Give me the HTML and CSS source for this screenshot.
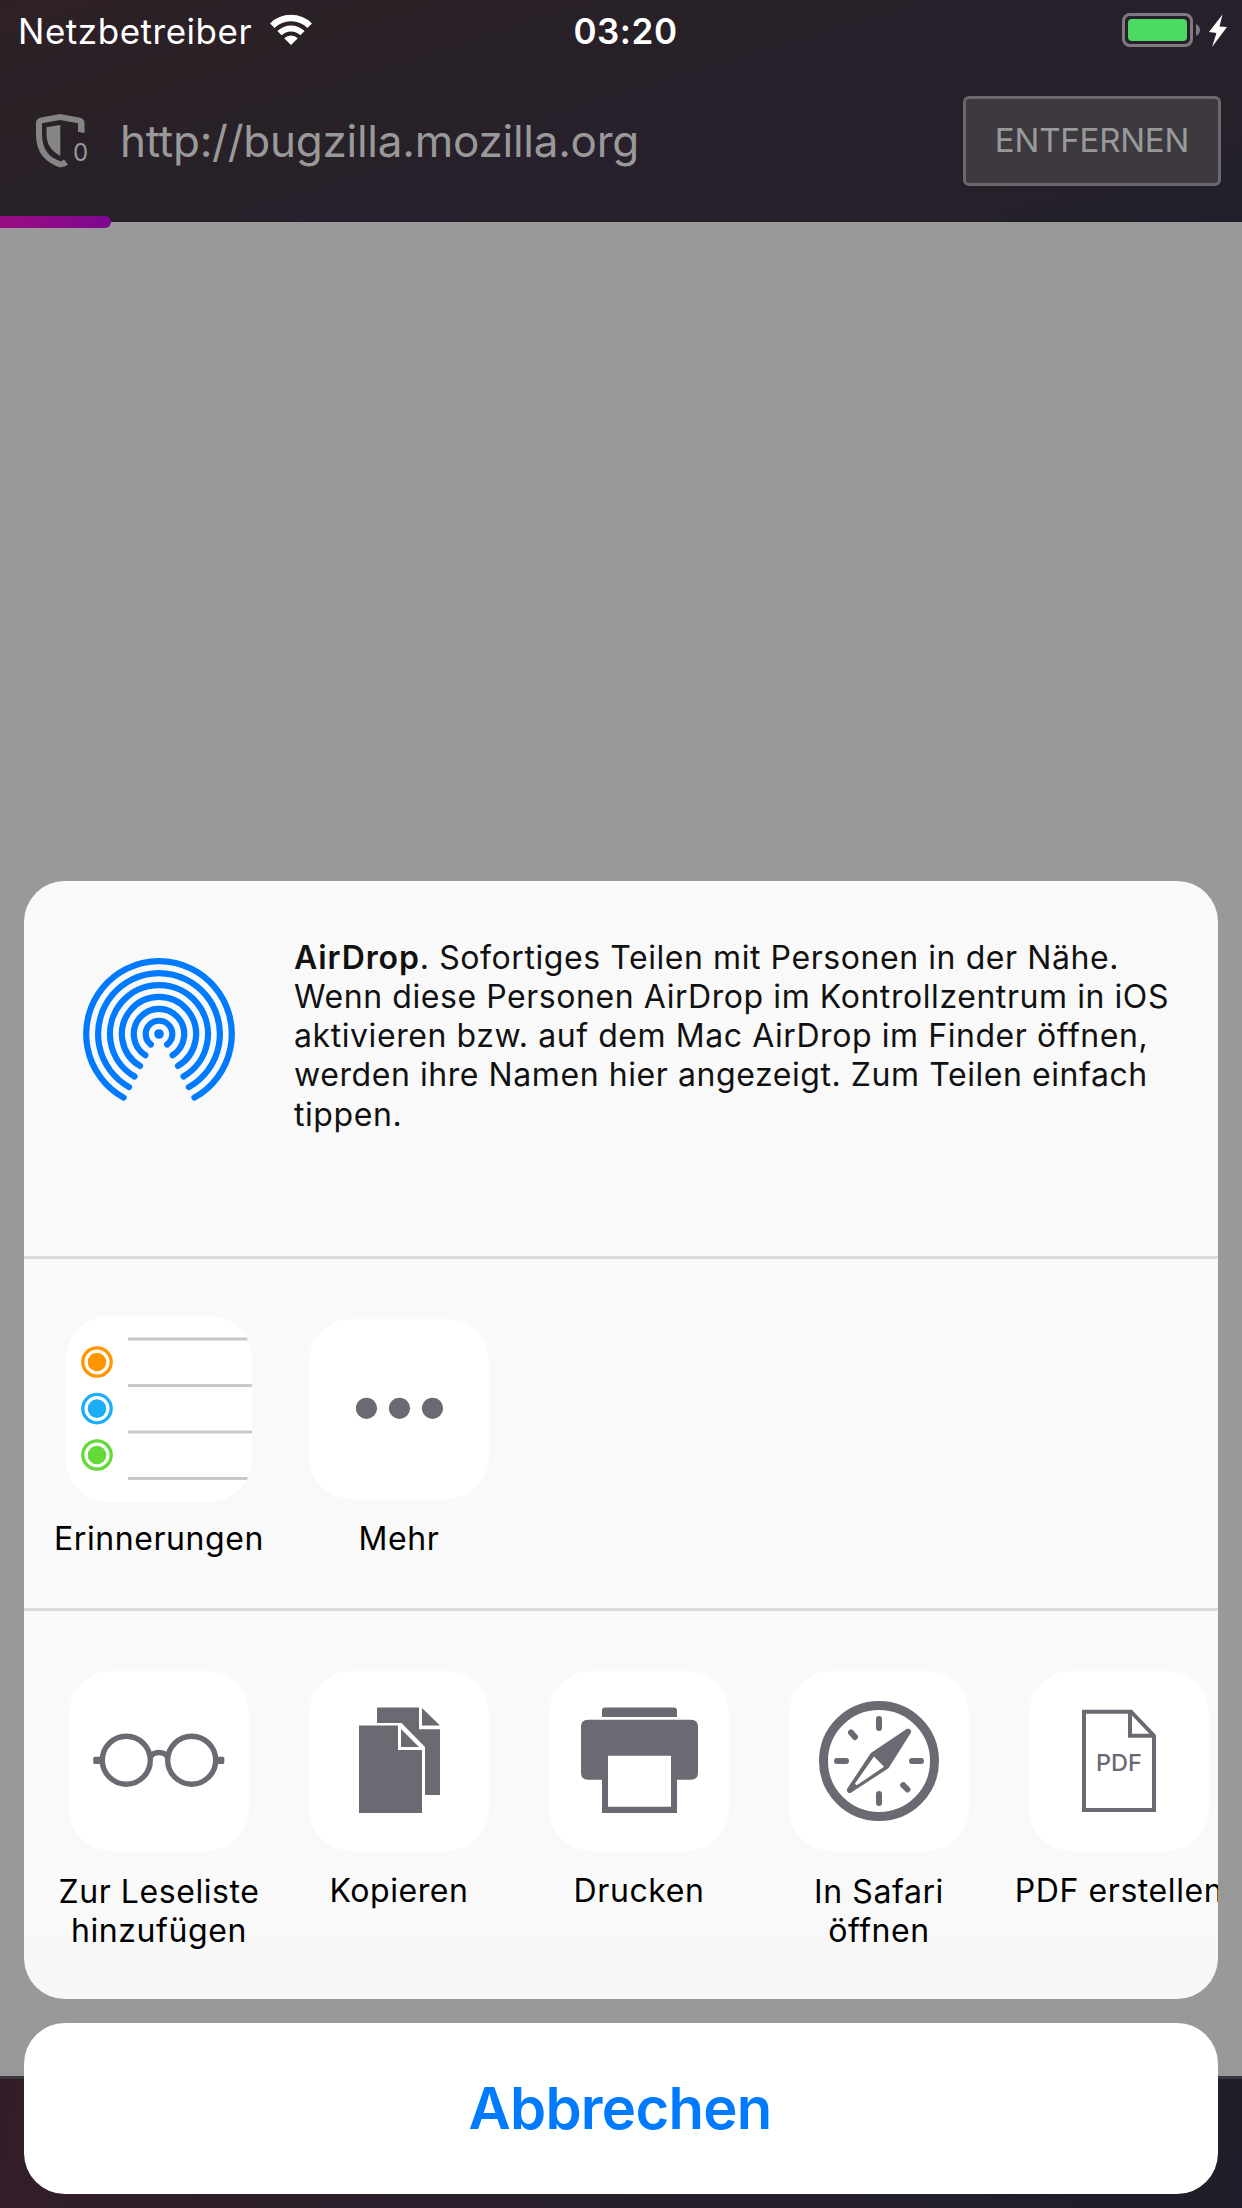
FILE: index.html
```
<!DOCTYPE html>
<html lang="de">
<head>
<meta charset="utf-8">
<title>Teilen</title>
<link rel="stylesheet" href="styles.css">
</head>
<body>
<div class="screen">
  <header class="header">
    <div class="status">
      <div class="status-left">
        <span class="carrier">Netzbetreiber</span>
        <svg class="wifi" width="42" height="32" viewBox="0 0 42 32">
          <path d="M2.3 11.7A26.7 26.7 0 0 1 39.7 11.7" fill="none" stroke="#fff" stroke-width="6.4"/>
          <path d="M9.5 19.1A16.4 16.4 0 0 1 32.5 19.1" fill="none" stroke="#fff" stroke-width="6"/>
          <path d="M21 31L14.2 24.2A9.6 9.6 0 0 1 27.8 24.2Z" fill="#fff"/>
        </svg>
      </div>
      <span class="time">03:20</span>
      <div class="status-right">
        <svg width="106" height="36" viewBox="0 0 106 36">
          <rect x="1.5" y="1.5" width="68" height="31" rx="6.5" fill="none" stroke="#7f7980" stroke-width="3"/>
          <rect x="6" y="6" width="59" height="22" rx="4" fill="#4cd964"/>
          <path d="M74 11Q78 13 78 17T74 23Z" fill="#7f7980"/>
          <path d="M100.5 1.5L87 19L94.5 20L90 34L105 14L97.5 13.5Z" fill="#fff"/>
        </svg>
      </div>
    </div>
    <div class="urlbar">
      <div class="shield">
        <svg width="50" height="56" viewBox="0 0 50 56" fill="#858585">
          <path d="M24 1L43 4.5Q48.5 5.5 48.5 10V20L42 18.8V10.3L24 7L6 10.3V21C6 36.5 13 44.5 25 48.5L28 46.5L32 51.5C29.5 53.3 27 54.2 24 54.4C8.5 49.5 0 38.5 0 22V10Q0 5.5 5 4.5Z"/>
          <path d="M10.5 14.3L24.3 12V43C15 38 10.5 31 10.5 20.5Z"/>
        </svg>
        <span class="count">0</span>
      </div>
      <span class="url">http://bugzilla.mozilla.org</span>
      <div class="erase">ENTFERNEN</div>
    </div>
    <div class="progress"></div>
  </header>
  <main class="page"></main>
  <footer class="toolbar"></footer>

  <div class="overlay">
    <div class="sheet">
      <section class="airdrop">
        <svg class="airdrop-icon" width="152" height="152" viewBox="-76 -76 152 152" fill="none" stroke="#007aff" stroke-width="6.2" stroke-linecap="round">
          <path d="M-8.2 10.5A13.3 13.3 0 1 1 8.2 10.5"/>
          <path d="M-13.7 21.2A25.2 25.2 0 1 1 13.7 21.2"/>
          <path d="M-19 31.9A37.1 37.1 0 1 1 19 31.9"/>
          <path d="M-24.5 42.5A49 49 0 1 1 24.5 42.5"/>
          <path d="M-29.9 53.1A60.9 60.9 0 1 1 29.9 53.1"/>
          <path d="M-35.4 63.6A72.8 72.8 0 1 1 35.4 63.6"/>
          <circle r="4.8" fill="#007aff" stroke="none"/>
        </svg>
        <p class="airdrop-text"><b>AirDrop</b>. Sofortiges Teilen mit Personen in der Nähe.<br>Wenn diese Personen AirDrop im Kontrollzentrum in iOS<br>aktivieren bzw. auf dem Mac AirDrop im Finder öffnen,<br>werden ihre Namen hier angezeigt. Zum Teilen einfach<br>tippen.</p>
      </section>
      <section class="row apps">
        <div class="item">
          <svg class="tile app-tile" width="186" height="186" viewBox="0 0 186 186">
            <g fill="#c7c7cc">
              <rect x="62" y="21.5" width="120" height="3"/>
              <rect x="62" y="68" width="124" height="3"/>
              <rect x="62" y="114.5" width="124" height="3"/>
              <rect x="62" y="161" width="120" height="3"/>
            </g>
            <g fill="none" stroke-width="3.3">
              <circle cx="31" cy="46" r="14.2" stroke="#ff9500"/>
              <circle cx="31" cy="92.6" r="14.2" stroke="#1badf8"/>
              <circle cx="31" cy="139" r="14.2" stroke="#63da38"/>
            </g>
            <circle cx="31" cy="46" r="9.3" fill="#ff9500"/>
            <circle cx="31" cy="92.6" r="9.3" fill="#1badf8"/>
            <circle cx="31" cy="139" r="9.3" fill="#63da38"/>
          </svg>
          <span class="label">Erinnerungen</span>
        </div>
        <div class="item">
          <svg class="tile" width="180" height="180" viewBox="0 0 180 180" fill="#6a6a73">
            <circle cx="57.5" cy="89.3" r="10.6"/>
            <circle cx="90.5" cy="89.3" r="10.6"/>
            <circle cx="123.5" cy="89.3" r="10.6"/>
          </svg>
          <span class="label">Mehr</span>
        </div>
      </section>
      <section class="row actions">
        <div class="item">
          <svg class="tile" width="180" height="180" viewBox="0 0 180 180" fill="none" stroke="#6a6a73" stroke-width="5.4">
            <circle cx="57.3" cy="89.2" r="24"/>
            <circle cx="122.7" cy="89.2" r="24"/>
            <path d="M81.5 86.2C84.5 80 95.5 80 98.5 86.2"/>
            <rect x="24.3" y="85.7" width="8" height="7.3" rx="1.5" fill="#6a6a73" stroke="none"/>
            <rect x="147.3" y="85.7" width="8" height="7.3" rx="1.5" fill="#6a6a73" stroke="none"/>
          </svg>
          <span class="label two-line">Zur Leseliste<br>hinzufügen</span>
        </div>
        <div class="item">
          <svg class="tile" width="180" height="180" viewBox="0 0 180 180" fill="#6a6a73">
            <path d="M68 36.6H110V58.2H131V124H116V76L92.5 52H68Z"/>
            <path d="M113 37V54.6H131Z"/>
            <path d="M50 54.6H89V79H113V142H50Z"/>
            <path d="M92 58V76H110Z"/>
          </svg>
          <span class="label">Kopieren</span>
        </div>
        <div class="item">
          <svg class="tile" width="180" height="180" viewBox="0 0 180 180" fill="#6a6a73">
            <path d="M53 46V39.6Q53 36.6 56 36.6H125Q128 36.6 128 39.6V46Z"/>
            <path d="M39 48.7H142Q149 48.7 149 55.7V101.7Q149 108.7 142 108.7H128V142H53V108.7H39Q32 108.7 32 101.7V55.7Q32 48.7 39 48.7ZM59 84.7V135.7H122V84.7Z" fill-rule="evenodd"/>
          </svg>
          <span class="label">Drucken</span>
        </div>
        <div class="item">
          <svg class="tile" width="180" height="180" viewBox="0 0 180 180" fill="none" stroke="#6a6a73" stroke-linecap="round">
            <circle cx="90" cy="90" r="55.5" stroke-width="9"/>
            <path d="M90 48V57M90 123V132M48 90H57M123 90H132M62 61.5L66 66M114.2 114.2L118.5 118.5" stroke-width="6"/>
            <path d="M118 57.8Q122.5 57 122 61.5L99.5 97.3L61.5 122Q57.5 122.5 58 118L81.8 82ZM85 85.5L66 112.5Q66.5 114.5 68.5 113.800L95 95.7Z" fill="#6a6a73" fill-rule="evenodd" stroke="none"/>
          </svg>
          <span class="label two-line">In Safari<br>öffnen</span>
        </div>
        <div class="item">
          <svg class="tile" width="180" height="180" viewBox="0 0 180 180">
            <path d="M55 40.700H102L125 64.7V139H55ZM101 40.700V64.7H125" fill="none" stroke="#6a6a73" stroke-width="4"/>
            <text class="pdf" x="67" y="100.3">PDF</text>
          </svg>
          <span class="label">PDF erstellen</span>
        </div>
      </section>
    </div>
    <div class="cancel">Abbrechen</div>
  </div>
</div>
</body>
</html>
```
FILE: styles.css
```
body {
  margin: 0;
  font-family: Inter, "Liberation Sans", sans-serif;
}

.screen {
  position: relative;
  display: flex;
  flex-direction: column;
  width: 1242px;
  height: 2208px;
  overflow: hidden;
}

.header {
  position: relative;
  height: 222px;
  background: linear-gradient(163deg, #2e2027 0%, #2a2127 22%, #272127 40%, #28202c 52%, #27202b 78%, #21202a 100%);
}

.status {
  display: grid;
  grid-template-columns: 1fr auto 1fr;
  height: 62px;
  color: #fff;
  font-size: 35px;
  line-height: 62px;
}

.status-left {
  display: flex;
  gap: 18px;
  padding-left: 18px;
  letter-spacing: 0.53px;
}

.wifi {
  margin-top: 14px;
}

.time {
  padding-left: 9px;
  font-weight: 600;
  letter-spacing: 0.54px;
}

.status-right {
  display: flex;
  justify-content: flex-end;
  padding: 13px 14px 0 0;
}

.urlbar {
  display: flex;
  align-items: center;
  height: 158px;
  padding: 0 21px 0 36px;
}

.shield {
  position: relative;
  width: 84px;
  height: 56px;
}

.shield svg {
  display: block;
}

.count {
  position: absolute;
  left: 37px;
  top: 25px;
  color: #999;
  font-size: 24px;
  line-height: 30px;
}

.url {
  flex: 1;
  color: #999;
  font-size: 44px;
  letter-spacing: -0.25px;
}

.erase {
  box-sizing: border-box;
  width: 258px;
  height: 90px;
  padding-bottom: 2px;
  border: 3px solid #6a676d;
  border-radius: 6px;
  background: #3d393f;
  color: #999;
  font-size: 33px;
  line-height: 82px;
  letter-spacing: -0.2px;
  text-align: center;
}

.progress {
  position: absolute;
  left: 0;
  top: 216px;
  width: 111px;
  height: 12px;
  border-radius: 0 6px 6px 0;
  background: linear-gradient(90deg, #9b0d82, #7d0790);
}

.page {
  flex: 1;
  background: #999;
}

.toolbar {
  height: 129px;
  border-top: 3px solid #3a363d;
  background: linear-gradient(100deg, #321e28 0%, #2b1f2a 25%, #241f2b 65%, #201e2a 100%);
}

.overlay {
  position: absolute;
  left: 24px;
  right: 24px;
  top: 881px;
  display: flex;
  flex-direction: column;
  gap: 24px;
}

.sheet {
  height: 1118px;
  border-radius: 41px;
  background: linear-gradient(#f9f9f9 90%, #f7f7f7);
  overflow: hidden;
}

.airdrop {
  display: flex;
  gap: 59px;
  height: 375px;
  padding-left: 59px;
  border-bottom: 3px solid #dadadf;
}

.airdrop-icon {
  margin-top: 77px;
}

.airdrop-text {
  margin: 56.5px 0 0;
  color: #111;
  font-size: 32px;
  line-height: 39.33px;
  letter-spacing: 0.57px;
  white-space: nowrap;
}

.airdrop-text b {
  font-weight: 600;
  letter-spacing: 0.9px;
}

.row {
  display: flex;
  padding-left: 15px;
}

.apps {
  height: 349px;
  border-bottom: 3px solid #dadadf;
}

.item {
  display: flex;
  flex: none;
  flex-direction: column;
  align-items: center;
  width: 240px;
}

.tile {
  margin-top: 60px;
  border-radius: 42px;
  background: #fff;
}

.app-tile {
  margin-top: 57px;
  margin-bottom: -3px;
}

.label {
  margin-top: 19.5px;
  color: #000;
  font-size: 32px;
  line-height: 39.33px;
  letter-spacing: 0.58px;
  text-align: center;
  white-space: nowrap;
}

.two-line {
  margin-top: 20.5px;
}

.pdf {
  fill: #6a6a73;
  font-size: 23.5px;
  font-weight: 500;
}

.cancel {
  height: 171px;
  padding-right: 2px;
  border-radius: 41px;
  background: #fff;
  color: #007aff;
  font-size: 58px;
  font-weight: 600;
  line-height: 171px;
  letter-spacing: -0.75px;
  text-align: center;
}
```
